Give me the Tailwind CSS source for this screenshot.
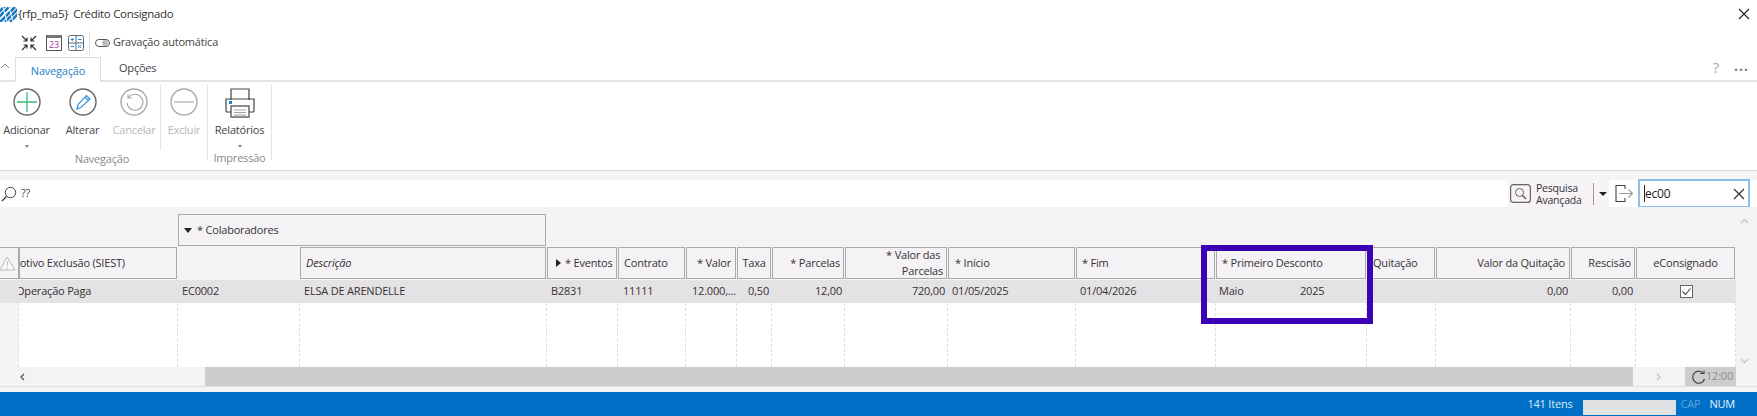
<!DOCTYPE html>
<html lang="pt-BR">
<head>
    <meta charset="UTF-8">
    <title>Crédito Consignado</title>
    <script src="https://cdn.jsdelivr.net/npm/@tailwindcss/browser@4"></script>
</head>
<body class="bg-white">
<div class="relative w-[1757px] h-[416px] overflow-hidden flex flex-col font-['Open_Sans',sans-serif] text-[11px] tracking-[-0.2px] text-[#333]">

    <!-- Title -->
    <div class="h-[28px] flex items-center">
        <svg width="17" height="15" viewBox="0 0 17 15" class="shrink-0">
            <g stroke="#1a78bf" stroke-width="2.6" fill="none">
                <path d="M-1 5 L5 -1 M-1 10 L10 -1 M0 15 L15 0 M5 15 L18 2 M10 15 L18 7"/>
            </g>
            <g stroke="#fff" stroke-width="1">
                <path d="M3 0 L7 15 M9 0 L13 15"/>
            </g>
        </svg>
        <span class="ml-[1px] text-[11.5px] tracking-[-0.3px]">{rfp_ma5}</span>
        <span class="ml-[5px] text-[11.5px] tracking-[-0.3px]">Crédito Consignado</span>
        <svg width="14" height="14" viewBox="0 0 14 14" class="ml-auto mr-[6px]"><path d="M2 2 L12 12 M12 2 L2 12" stroke="#222" stroke-width="1.1"/></svg>
    </div>

    <!-- Quick toolbar -->
    <div class="h-[29px] flex items-center pl-[21px]">
        <svg width="16" height="16" viewBox="0 0 16 16" fill="none" stroke="#333" stroke-width="1.2">
            <path d="M1 1 L6 6 M6 2.5 V6 H2.5 M15 1 L10 6 M10 2.5 V6 H13.5 M1 15 L6 10 M6 13.5 V10 H2.5 M15 15 L10 10 M10 13.5 V10 H13.5"/>
        </svg>
        <div class="ml-[9px] relative w-[16px] h-[16px] border border-[#555] bg-white flex items-center justify-center">
            <div class="absolute -top-px left-0 right-0 h-[3px] bg-[#777]"></div>
            <span class="text-[9px] leading-none mt-[3px] text-[#a23aa8]">23</span>
        </div>
        <svg width="16" height="16" viewBox="0 0 16 16" class="ml-[6px]" fill="none">
            <rect x="0.5" y="0.5" width="15" height="15" rx="2" stroke="#5b6b7a"/>
            <path d="M8 1 V15 M1 8 H15" stroke="#5b6b7a"/>
            <path d="M2.5 4.5 H6 M4.2 3 V6 M10 4.5 H13.5 M2.5 11.5 H6 M10 10 L13 13 M13 10 L10 13" stroke="#2a8ad4"/>
        </svg>
        <div class="ml-[5px] w-px h-[24px] bg-[#ddd]"></div>
        <div class="ml-[5px] w-[15px] h-[8px] rounded-full border border-[#555] flex items-center justify-end pr-px">
            <div class="w-[6px] h-[6px] rounded-full bg-[#bbb]"></div>
        </div>
        <span class="ml-[3px] text-[#444]">Gravação automática</span>
    </div>

    <!-- Tabs -->
    <div class="h-[25px] flex items-end border-b-2 border-[#e3e3e3] relative">
        <svg width="10" height="6" viewBox="0 0 10 6" class="mb-[11px]" fill="none"><path d="M1 5 L5 1 L9 5" stroke="#888"/></svg>
        <div class="ml-[5px] w-[86px] h-[25px] -mb-[2px] pt-[2px] bg-white border border-b-0 border-[#ddd] flex items-center justify-center text-[#1f7fc4]">Navegação</div>
        <div class="ml-[18px] h-[25px] pt-[2px] flex items-center text-[#444]">Opções</div>
        <div class="ml-auto h-[25px] flex items-center pr-[8px] gap-[15px] text-[#aaa]">
            <span class="text-[15px] leading-none">?</span>
            <span class="text-[#777] text-[14px] leading-none tracking-[1px] font-bold mb-[4px]">...</span>
        </div>
    </div>

    <!-- Ribbon -->
    <div class="h-[89px] flex border-b border-[#dcdcdc] pt-[3px]">
        <div class="w-[160px] flex flex-col">
            <div class="flex-1 flex">
                <div class="w-[53px] flex flex-col items-center">
                    <svg width="28" height="28" viewBox="0 0 28 28" class="mt-[3px]" fill="none">
                        <circle cx="14" cy="14" r="13" stroke="#666" stroke-width="1.4"/>
                        <path d="M14 4 V24 M4 14 H24" stroke="#3cb878" stroke-width="1.3"/>
                    </svg>
                    <span class="mt-[6px] text-[#444]">Adicionar</span>
                    <span class="w-0 h-0 mt-[6px] border-x-[2px] border-x-transparent border-t-[3px] border-t-[#888]"></span>
                </div>
                <div class="ml-[4px] w-[51px] flex flex-col items-center">
                    <svg width="28" height="28" viewBox="0 0 28 28" class="mt-[3px]" fill="none">
                        <circle cx="14" cy="14" r="13" stroke="#666" stroke-width="1.4"/>
                        <path d="M8 21 L9 16.5 L17.5 7.5 L21 11 L12 19.5 Z M16 9 L19.5 12.5" stroke="#3a8fdc" stroke-width="1.2"/>
                    </svg>
                    <span class="mt-[6px] text-[#444]">Alterar</span>
                </div>
                <div class="w-[52px] flex flex-col items-center">
                    <svg width="28" height="28" viewBox="0 0 28 28" class="mt-[3px]" fill="none">
                        <circle cx="14" cy="14" r="13" stroke="#aaa" stroke-width="1.4"/>
                        <path d="M8.5 9.5 A8 8 0 1 1 7 15 M8 6 V10 H12" stroke="#aaa" stroke-width="1.1"/>
                    </svg>
                    <span class="mt-[6px] text-[#b5b5b5]">Cancelar</span>
                </div>
            </div>
            <div class="h-[24px] flex items-center justify-center text-[#888] pl-[44px]">Navegação</div>
        </div>
        <div class="w-px h-[65px] bg-[#e3e3e3]"></div>
        <div class="w-[46px] flex flex-col items-center">
            <svg width="28" height="28" viewBox="0 0 28 28" class="mt-[3px]" fill="none">
                <circle cx="14" cy="14" r="13" stroke="#aaa" stroke-width="1.4"/>
                <path d="M4 14 H24" stroke="#aaa" stroke-width="1.2"/>
            </svg>
            <span class="mt-[6px] text-[#b5b5b5]">Excluir</span>
        </div>
        <div class="w-px h-[75px] bg-[#e3e3e3]"></div>
        <div class="w-[63px] flex flex-col items-center">
            <svg width="30" height="30" viewBox="0 0 30 30" class="mt-[3px]" fill="none" stroke="#444" stroke-width="1.2">
                <path d="M6 12 V1 H24 V12"/>
                <path d="M6 24 H2 A1 1 0 0 1 1 23 V11 H29 V23 A1 1 0 0 1 28 24 H24"/>
                <rect x="6" y="18" width="18" height="11" fill="#fff"/>
                <path d="M9 22 H21 M9 24.5 H21 M9 27 H21" stroke="#888" stroke-width="0.8"/>
                <rect x="4" y="13" width="3" height="3" fill="#1f7fc4" stroke="none"/>
            </svg>
            <span class="mt-[4px] text-[#444]">Relatórios</span>
            <span class="w-0 h-0 mt-[6px] border-x-[2px] border-x-transparent border-t-[3px] border-t-[#888]"></span>
            <span class="mt-[2px] text-[#888]">Impressão</span>
        </div>
        <div class="w-px h-[75px] bg-[#e3e3e3]"></div>
    </div>

    <div class="h-[9px] bg-[#f6f5f6]"></div>

    <!-- Search row -->
    <div class="h-[27px] flex items-center bg-white">
        <svg width="16" height="16" viewBox="0 0 16 16" fill="none" stroke="#444" class="ml-[1px]">
            <circle cx="9.5" cy="6.5" r="5.2"/>
            <path d="M5.5 10.5 L1 15" stroke-width="1.5"/>
        </svg>
        <span class="ml-[4px] text-[#444]">??</span>
        <div class="ml-auto h-[27px] w-[101px] bg-[#f7f3f7] flex items-center pl-[2px]">
            <svg width="21" height="19" viewBox="0 0 21 19" fill="none" stroke="#666" class="shrink-0">
                <rect x="0.6" y="0.6" width="19.8" height="17.8" rx="3" stroke-width="1.2"/>
                <circle cx="9.5" cy="8.5" r="4"/>
                <path d="M12.5 11.5 L16 15" stroke-width="1.6"/>
            </svg>
            <div class="ml-[5px] w-[57px] shrink-0 text-[10.5px] leading-[12px] text-[#333]">Pesquisa<br>Avançada</div>
            <div class="w-px h-[22px] bg-[#999]"></div>
            <span class="ml-[5px] w-0 h-0 border-x-[4px] border-x-transparent border-t-[4px] border-t-[#222]"></span>
        </div>
        <svg width="19" height="19" viewBox="0 0 19 19" fill="none" class="ml-[6px]">
            <path d="M10 5 V1.5 H1 V17.5 H10 V14" stroke="#444" stroke-width="1.1"/>
            <path d="M4 9.5 H17 M13.5 5.5 L17.5 9.5 L13.5 13.5" stroke="#999" stroke-width="1.1"/>
        </svg>
        <div class="ml-[4px] mr-[7px] w-[112px] h-[29px] border-2 border-[#8cc0e8] flex items-center pl-[4px] pr-[3px] text-[12px] text-[#222]">
            <span class="w-px h-[17px] bg-[#222]"></span>
            <span>ec00</span>
            <svg width="12" height="12" viewBox="0 0 12 12" class="ml-auto"><path d="M1 1 L11 11 M11 1 L1 11" stroke="#333" stroke-width="1.2"/></svg>
        </div>
    </div>

    <!-- Grid -->
    <div class="flex-1 flex flex-col bg-[#f5f2f6]">
        <div class="flex pt-[7px] h-[40px]">
            <div class="ml-[178px] w-[368px] h-[32px] border border-[#a9a9a9] flex items-center pl-[5px]">
                <span class="w-0 h-0 border-x-[4px] border-x-transparent border-t-[5px] border-t-[#222]"></span>
                <span class="ml-[5px]">* Colaboradores</span>
            </div>
            <div class="ml-auto mr-[8px] mt-[4px]">
                <svg width="9" height="6" viewBox="0 0 9 6" fill="none"><path d="M1 5 L4.5 1.5 L8 5" stroke="#c5c5c5" stroke-width="1.3"/></svg>
            </div>
        </div>

        <div class="grid grid-cols-[19px_159px_122px_247px_71px_68px_51px_35px_73px_103px_128px_140px_151px_69px_135px_65px_100px] grid-rows-[33px_23px_64px] w-[1736px]">
            <!-- header -->
            <div class="h-[32px] overflow-hidden border border-[#a9a9a9] border-l-0 flex items-center justify-center">
                <svg width="18" height="15" viewBox="0 0 18 15" fill="none" class="shrink-0 -ml-[2px]"><path d="M8 1 L16 14 H1 Z" stroke="#bbb" fill="#f9f7f5"/><path d="M8.5 5 V10 M8.5 11.5 V13" stroke="#d0c4b0"/></svg>
            </div>
            <div class="h-[32px] overflow-hidden border border-[#a9a9a9] flex items-center mr-px"><span class="-ml-[10px] whitespace-nowrap">Motivo Exclusão (SIEST)</span></div>
            <div class="h-[32px]"></div>
            <div class="h-[32px] border border-[#a9a9a9] flex items-center pl-[5px] mr-px italic">Descrição</div>
            <div class="h-[32px] border border-[#a9a9a9] flex items-center pl-[8px] mr-px">
                <span class="w-0 h-0 border-y-[4px] border-y-transparent border-l-[5px] border-l-[#222]"></span>
                <span class="ml-[4px] whitespace-nowrap">* Eventos</span>
            </div>
            <div class="h-[32px] border border-[#a9a9a9] flex items-center pl-[5px] mr-px">Contrato</div>
            <div class="h-[32px] border border-[#a9a9a9] flex items-center justify-end pr-[4px] mr-px">* Valor</div>
            <div class="h-[32px] border border-[#a9a9a9] flex items-center justify-center mr-px">Taxa</div>
            <div class="h-[32px] border border-[#a9a9a9] flex items-center justify-end pr-[3px] mr-px">* Parcelas</div>
            <div class="h-[32px] border border-[#a9a9a9] flex items-center justify-end text-right pr-[3px] mr-px leading-[16px]"><span>* Valor das&nbsp;<br>Parcelas</span></div>
            <div class="h-[32px] border border-[#a9a9a9] flex items-center pl-[6px] mr-px">* Início</div>
            <div class="h-[32px] border border-[#a9a9a9] flex items-center pl-[5px] mr-px">* Fim</div>
            <div class="h-[32px] border border-[#a9a9a9] flex items-center pl-[5px] mr-px">* Primeiro Desconto</div>
            <div class="h-[32px] border border-[#a9a9a9] flex items-center pl-[5px] mr-px">Quitação</div>
            <div class="h-[32px] border border-[#a9a9a9] flex items-center justify-end pr-[4px] mr-px">Valor da Quitação</div>
            <div class="h-[32px] border border-[#a9a9a9] flex items-center justify-end pr-[3px] mr-px">Rescisão</div>
            <div class="h-[32px] border border-[#a9a9a9] flex items-center justify-center mr-px">eConsignado</div>

            <!-- row -->
            <div class="bg-[#e5e2e5]"></div>
            <div class="bg-[#e5e2e5] overflow-hidden flex items-center"><span class="-ml-[3px] whitespace-nowrap">Operação Paga</span></div>
            <div class="bg-[#e5e2e5] flex items-center pl-[4px]">EC0002</div>
            <div class="bg-[#e5e2e5] flex items-center pl-[4px]">ELSA DE ARENDELLE</div>
            <div class="bg-[#e5e2e5] flex items-center pl-[4px]">B2831</div>
            <div class="bg-[#e5e2e5] flex items-center pl-[5px]">11111</div>
            <div class="bg-[#e5e2e5] flex items-center pl-[6px] whitespace-nowrap">12.000,...</div>
            <div class="bg-[#e5e2e5] flex items-center justify-end pr-[3px]">0,50</div>
            <div class="bg-[#e5e2e5] flex items-center justify-end pr-[3px]">12,00</div>
            <div class="bg-[#e5e2e5] flex items-center justify-end pr-[3px]">720,00</div>
            <div class="bg-[#e5e2e5] flex items-center pl-[4px]">01/05/2025</div>
            <div class="bg-[#e5e2e5] flex items-center pl-[4px]">01/04/2026</div>
            <div class="bg-[#e5e2e5] flex items-center pl-[3px]">
                <span class="w-[81px]">Maio</span><span>2025</span>
            </div>
            <div class="bg-[#e5e2e5]"></div>
            <div class="bg-[#e5e2e5] flex items-center justify-end pr-[3px]">0,00</div>
            <div class="bg-[#e5e2e5] flex items-center justify-end pr-[3px]">0,00</div>
            <div class="bg-[#e5e2e5] flex items-center justify-center">
                <svg width="13" height="13" viewBox="0 0 13 13" fill="none"><rect x="0.5" y="0.5" width="12" height="12" fill="#fff" stroke="#666"/><path d="M2.5 6.5 L5.5 9.5 L10.5 3.5" stroke="#444" stroke-width="1.1"/></svg>
            </div>

            <!-- empty area -->
            <div class="bg-[#f5f5f5] border-r border-dashed border-[#ddd]"></div>
            <div class="bg-white border-r border-dashed border-[#ddd]"></div>
            <div class="bg-white border-r border-dashed border-[#ddd]"></div>
            <div class="bg-white border-r border-dashed border-[#ddd]"></div>
            <div class="bg-white border-r border-dashed border-[#ddd]"></div>
            <div class="bg-white border-r border-dashed border-[#ddd]"></div>
            <div class="bg-white border-r border-dashed border-[#ddd]"></div>
            <div class="bg-white border-r border-dashed border-[#ddd]"></div>
            <div class="bg-white border-r border-dashed border-[#ddd]"></div>
            <div class="bg-white border-r border-dashed border-[#ddd]"></div>
            <div class="bg-white border-r border-dashed border-[#ddd]"></div>
            <div class="bg-white border-r border-dashed border-[#ddd]"></div>
            <div class="bg-white border-r border-dashed border-[#ddd]"></div>
            <div class="bg-white border-r border-dashed border-[#ddd]"></div>
            <div class="bg-white border-r border-dashed border-[#ddd]"></div>
            <div class="bg-white border-r border-dashed border-[#ddd]"></div>
            <div class="bg-white border-r border-dashed border-[#ddd]"></div>
        </div>

        <!-- horizontal scrollbar -->
        <div class="h-[19px] flex items-stretch w-[1736px]">
            <div class="w-[205px] pl-[19px] flex items-center">
                <svg width="6" height="8" viewBox="0 0 6 8" fill="none"><path d="M5 1 L2 4 L5 7" stroke="#555" stroke-width="1.3"/></svg>
            </div>
            <div class="w-[1428px] bg-[#cdcdcd]"></div>
            <div class="w-[52px] flex items-center justify-center">
                <svg width="6" height="8" viewBox="0 0 6 8" fill="none"><path d="M1 1 L4 4 L1 7" stroke="#c5c5c5" stroke-width="1.3"/></svg>
            </div>
            <div class="w-[51px] bg-[#cdcdcd] flex items-center pl-[7px]">
                <svg width="14" height="14" viewBox="0 0 14 14" fill="none" class="shrink-0"><path d="M11.5 3.5 A6 6 0 1 0 12.5 9" stroke="#444" stroke-width="1.2"/><path d="M8 3.5 H12 V0.5" stroke="#444" stroke-width="1.1"/></svg>
                <span class="text-[#8f8f8f] text-[11px]">12:00</span>
            </div>
        </div>
        <div class="h-[6px] bg-[#f5f2f6] border-t border-[#e0e0e0]"></div>
    </div>

    <!-- Status bar -->
    <div class="h-[24px] bg-[#0070c6] flex items-center justify-end pr-[22px] text-[11px] text-[#dcebf7]">
        <span>141 Itens</span>
        <div class="ml-[11px] w-[93px] h-[15px] mt-[6px] bg-[#dfe1e3]"></div>
        <span class="ml-[4px] text-[#5ea3da]">CAP</span>
        <span class="ml-[9px] text-[#e8f2fa]">NUM</span>
    </div>

    <!-- Annotation over the screenshot -->
    <div class="absolute left-[1201px] top-[245px] w-[172px] h-[79px] border-[6px] border-[#3b03b3]"></div>
    <svg width="9" height="6" viewBox="0 0 9 6" fill="none" class="absolute left-[1740px] top-[358px]"><path d="M1 1 L4.5 4.5 L8 1" stroke="#c5c5c5" stroke-width="1.3"/></svg>
</div>
</body>
</html>
